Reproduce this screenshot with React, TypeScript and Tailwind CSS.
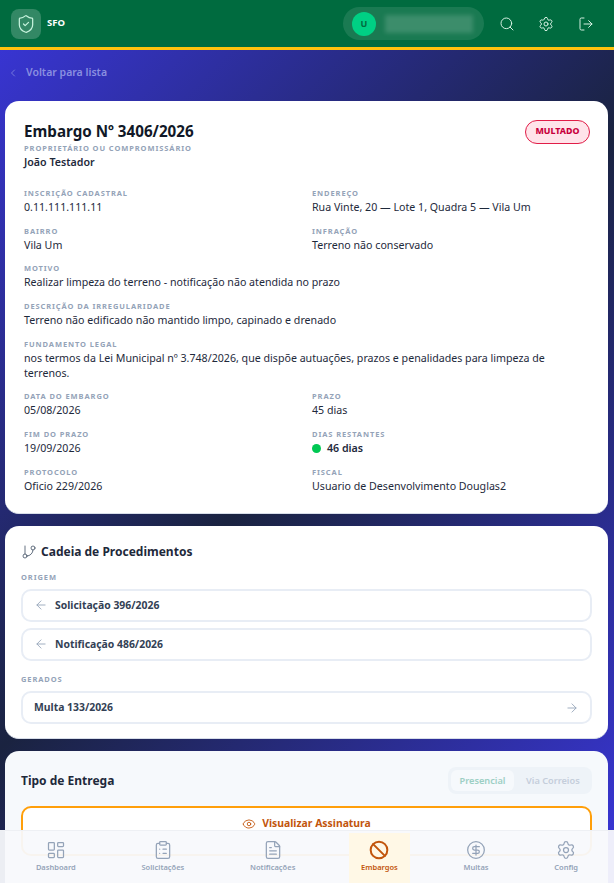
import {
  ArrowLeft,
  ArrowRight,
  Ban,
  ChevronLeft,
  CircleDollarSign,
  ClipboardList,
  Eye,
  FileText,
  GitBranch,
  LayoutDashboard,
  LogOut,
  Search,
  Settings,
  ShieldCheck,
} from 'lucide-react';
import type { ReactNode } from 'react';

function Label({ children }: { children: ReactNode }) {
  return (
    <div className="text-[7.5px] leading-[12px] font-bold uppercase tracking-[0.12em] text-[#94a3b8]">{children}</div>
  );
}

function Field({ label, value, className = '' }: { label: string; value: ReactNode; className?: string }) {
  return (
    <div className={className}>
      <Label>{label}</Label>
      <div className="text-[10.65px] leading-[15px] mt-[1px] text-[#1e293b]">{value}</div>
    </div>
  );
}

function ChainLink({ label, dir }: { label: string; dir: 'back' | 'forward' }) {
  return (
    <div className="h-[33px] flex items-center justify-between px-[11px] rounded-[10px] border-2 border-[#e8edf5] bg-white">
      <div className="flex items-center gap-[7px]">
        {dir === 'back' && <ArrowLeft className="w-[14px] h-[14px] text-[#94a3b8]" strokeWidth={1.5} />}
        <span className="text-[10.4px] font-bold text-[#334155]">{label}</span>
      </div>
      {dir === 'forward' && <ArrowRight className="w-[14px] h-[14px] text-[#94a3b8]" strokeWidth={1.5} />}
    </div>
  );
}

const navItems = [
  { label: 'Dashboard', icon: LayoutDashboard },
  { label: 'Solicitações', icon: ClipboardList },
  { label: 'Notificações', icon: FileText },
  { label: 'Embargos', icon: Ban, active: true },
  { label: 'Multas', icon: CircleDollarSign },
  { label: 'Config', icon: Settings },
];

export default function App() {
  return (
    <div
      className="relative h-screen overflow-hidden bg-[linear-gradient(135deg,#3a36dc_0%,#1a2340_50%,#3a36dc_100%)] text-[#1e293b]"
      style={{ fontFamily: '"Noto Sans", sans-serif' }}
    >
      {/* Header */}
      <header className="h-[50px] bg-[#006b3f] border-b-[3px] border-[#ffc20e] flex items-center justify-between pl-[11px] pr-[20px]">
        <div className="flex items-center gap-[6px]">
          <div className="w-[30px] h-[30px] rounded-[8px] bg-white/20 flex items-center justify-center">
            <ShieldCheck className="w-[20px] h-[20px] text-[#c5f2dc]" strokeWidth={1.5} />
          </div>
          <span className="text-[9.5px] font-bold text-white">SFO</span>
        </div>
        <div className="flex items-center">
          <div className="w-[141px] h-[33px] rounded-full bg-white/10 flex items-center pl-[9px] mr-[15px]">
            <div className="w-[24px] h-[24px] rounded-full bg-[#00d084] flex items-center justify-center text-[9px] font-bold text-[#006b3f]">
              U
            </div>
            <div className="ml-[9px] w-[88px] h-[18px] bg-white/15 blur-[2px]" />
          </div>
          <Search className="w-[16px] h-[16px] text-[#d5f0e2]" strokeWidth={1.5} />
          <Settings className="w-[16px] h-[16px] ml-[23px] text-[#d5f0e2]" strokeWidth={1.5} />
          <LogOut className="w-[16px] h-[16px] ml-[24px] text-[#d5f0e2]" strokeWidth={1.5} />
        </div>
      </header>

      {/* Content */}
      <main className="px-[5px] mr-[1px]">
        <div className="h-[51px] pb-[6px] flex items-center gap-[7px] pl-[2px] text-[10.5px] font-semibold text-[#8a8fe0]">
          <ChevronLeft className="w-[12px] h-[12px]" strokeWidth={1.5} />
          <span>Voltar para lista</span>
        </div>

        <section className="h-[413px] rounded-[14px] bg-white pt-[19px] px-[19px] border-b border-[#d8dee9]">
          <div className="flex items-start justify-between">
            <div>
              <h1 className="text-[15.2px] leading-[22px] font-bold text-[#111827]">Embargo Nº 3406/2026</h1>
              <Label>Proprietário ou Compromissário</Label>
              <div className="text-[10.65px] leading-[14px] font-semibold text-[#1e293b] mt-[1px]">João Testador</div>
            </div>
            <span className="mr-[-1px] h-[24px] px-[9.5px] flex items-center rounded-full bg-[#ffe4ea] border border-[#e11d48] text-[8.8px] font-extrabold text-[#c8003c]">
              MULTADO
            </span>
          </div>

          <div className="grid grid-cols-[288px_1fr] gap-y-[9.7px] mt-[18px]">
            <Field label="Inscrição Cadastral" value="0.11.111.111.11" />
            <Field label="Endereço" value="Rua Vinte, 20 — Lote 1, Quadra 5 — Vila Um" />
            <Field label="Bairro" value="Vila Um" />
            <Field label="Infração" value="Terreno não conservado" />
            <Field className="col-span-2" label="Motivo" value="Realizar limpeza do terreno - notificação não atendida no prazo" />
            <Field className="col-span-2" label="Descrição da Irregularidade" value="Terreno não edificado não mantido limpo, capinado e drenado" />
            <Field
              className="col-span-2"
              label="Fundamento Legal"
              value="nos termos da Lei Municipal nº 3.748/2026, que dispõe autuações, prazos e penalidades para limpeza de terrenos."
            />
            <Field label="Data do Embargo" value="05/08/2026" />
            <Field label="Prazo" value="45 dias" />
            <Field label="Fim do Prazo" value="19/09/2026" />
            <Field
              label="Dias Restantes"
              value={
                <span className="flex items-center gap-[6px] font-semibold">
                  <span className="w-[9px] h-[9px] rounded-full bg-[#00c853]" />
                  46 dias
                </span>
              }
            />
            <Field label="Protocolo" value="Oficio 229/2026" />
            <Field label="Fiscal" value="Usuario de Desenvolvimento Douglas2" />
          </div>
        </section>

        <section className="h-[213px] mt-[12px] rounded-[14px] bg-white pt-[17px] px-[16px] border-b border-[#d8dee9]">
          <div className="flex items-center gap-[4px] h-[18px]">
            <GitBranch className="w-[16px] h-[16px] text-[#475569]" strokeWidth={1.25} />
            <h2 className="text-[12px] font-bold text-[#1e293b]">Cadeia de Procedimentos</h2>
          </div>
          <div className="mt-[10px] mb-[6px]">
            <Label>Origem</Label>
          </div>
          <div className="flex flex-col gap-[6px]">
            <ChainLink dir="back" label="Solicitação 396/2026" />
            <ChainLink dir="back" label="Notificação 486/2026" />
          </div>
          <div className="mt-[12px] mb-[6px]">
            <Label>Gerados</Label>
          </div>
          <ChainLink dir="forward" label="Multa 133/2026" />
        </section>

        <section className="h-[200px] mt-[12px] rounded-[14px] bg-[#f6f9fc] pt-[16px] px-[16px]">
          <div className="flex items-center justify-between">
            <h2 className="text-[12px] font-bold text-[#1e293b]">Tipo de Entrega</h2>
            <div className="w-[144px] h-[27px] rounded-[8px] bg-[#eef3f8] p-[3px] flex items-center text-[9.2px] font-semibold whitespace-nowrap">
              <span className="w-[63px] h-[21px] flex items-center justify-center rounded-[6px] bg-[#f6f9fc] text-[#9ccfc4]">Presencial</span>
              <span className="pl-[12px] text-[#c5cedb]">Via Correios</span>
            </div>
          </div>
          <div className="mt-[12px] h-[50px] rounded-[10px] border-2 border-[#ff9f0a] bg-white flex justify-center pt-[8px]">
            <div className="flex items-center h-[16px] gap-[6px] text-[10.4px] font-bold text-[#c2550c]">
              <Eye className="w-[14px] h-[14px]" strokeWidth={1.5} />
              Visualizar Assinatura
            </div>
          </div>
        </section>
      </main>

      {/* Bottom nav */}
      <nav className="absolute bottom-0 inset-x-0 h-[53px] px-[3px] bg-[#f8f9fc]/95 border-t border-[#eef0f4] flex items-end justify-around">
        {navItems.map((item) => {
          const Icon = item.icon;
          return (
            <div
              key={item.label}
              className={`h-[50px] px-[12px] pt-[7px] flex flex-col items-center gap-[2px] text-[7.5px] leading-[10px] font-semibold ${
                item.active ? 'bg-[#fff8e6] text-[#c2550c]' : 'text-[#94a3b8]'
              }`}
            >
              <Icon className="w-[20px] h-[20px]" strokeWidth={item.active ? 2.4 : 1.5} />
              <span>{item.label}</span>
            </div>
          );
        })}
      </nav>
    </div>
  );
}
